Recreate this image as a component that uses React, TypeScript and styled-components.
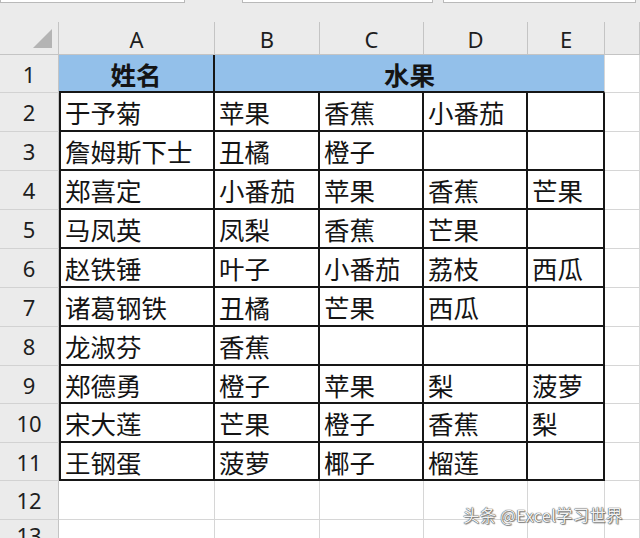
import React from "react";
import styled, { createGlobalStyle } from "styled-components";

const Global = createGlobalStyle`
  html, body { margin: 0; padding: 0; background: #fff; }
  #root { width: 640px; height: 538px; }
`;

const DARK = "#161616";
const GRID = "#d6d6d6";
const HEAD_BG = "#ebebeb";
const HEAD_LINE = "#c4c4c4";

const Page = styled.div`
  position: relative;
  width: 640px;
  height: 538px;
  overflow: hidden;
  background: #fff;
  font-family: "Noto Sans", "Noto Sans CJK SC", sans-serif;
`;

const TopStrip = styled.div`
  height: 22px;
  background: ${HEAD_BG};
  display: flex;
  align-items: flex-start;
`;

const FormulaBox = styled.div<{ $w: number; $ml: number }>`
  width: ${(p) => p.$w}px;
  margin-left: ${(p) => p.$ml}px;
  height: 3px;
  background: #fff;
  border: 1px solid #b9b9b9;
  border-top: none;
  box-sizing: border-box;
`;

const Sheet = styled.div`
  display: grid;
  grid-template-columns: 59px 156px 105px 104px 104px 77px 1fr;
  grid-template-rows: 33px 38px 39px 39px 39px 39px 39px 39px 39px 38px 39px 38px 39px 30px;
`;

const Corner = styled.div`
  position: relative;
  background: ${HEAD_BG};
  border-right: 1px solid ${HEAD_LINE};
  border-bottom: 1px solid ${HEAD_LINE};
  box-sizing: border-box;
`;

const CornerTriangle = styled.div`
  position: absolute;
  right: 6px;
  bottom: 6px;
  width: 0;
  height: 0;
  border-left: 19px solid transparent;
  border-bottom: 19px solid #b4b4b4;
`;

const ColHead = styled.div`
  background: ${HEAD_BG};
  border-right: 1px solid ${HEAD_LINE};
  border-bottom: 1px solid ${HEAD_LINE};
  box-sizing: border-box;
  display: flex;
  align-items: center;
  justify-content: center;
  font-size: 22px;
  color: #1e1e1e;
  padding-top: 1px;
`;

const RowHead = styled.div`
  background: ${HEAD_BG};
  border-right: 1px solid ${HEAD_LINE};
  border-bottom: 1px solid #d2d2d2;
  box-sizing: border-box;
  display: flex;
  align-items: center;
  justify-content: center;
  font-size: 22px;
  color: #1e1e1e;
`;

const Cell = styled.div<{
  $span?: number;
  $bg?: string;
  $bold?: boolean;
  $center?: boolean;
  $dl?: boolean;
  $dr?: boolean;
  $db?: boolean;
  $dt?: boolean;
}>`
  grid-column: span ${(p) => p.$span ?? 1};
  box-sizing: border-box;
  background: ${(p) => p.$bg ?? "#fff"};
  border-right: ${(p) => (p.$dr ? `2px solid ${DARK}` : `1px solid ${GRID}`)};
  border-bottom: ${(p) => (p.$db ? `2px solid ${DARK}` : `1px solid ${GRID}`)};
  border-left: ${(p) => (p.$dl ? `2px solid ${DARK}` : "none")};
  border-top: ${(p) => (p.$dt ? `2px solid ${DARK}` : "none")};
  display: flex;
  align-items: center;
  justify-content: ${(p) => (p.$center ? "center" : "flex-start")};
  padding-left: ${(p) => (p.$center ? 0 : 4)}px;
  font-family: "Noto Sans CJK SC", sans-serif;
  font-size: 25.5px;
  font-weight: ${(p) => (p.$bold ? 700 : 400)};
  color: #141414;
  white-space: nowrap;
  overflow: hidden;
`;

const Watermark = styled.div`
  position: absolute;
  left: 463px;
  top: 503px;
  font-family: "Noto Sans CJK SC", sans-serif;
  font-size: 16.5px;
  color: #f2f2f2;
  letter-spacing: 0.2px;
  text-shadow: 0 0 1px #444, 0 0 1px #444, 1px 1px 1px rgba(0, 0, 0, 0.45);
`;

const cols = ["A", "B", "C", "D", "E", ""];

const data: string[][] = [
  ["于予菊", "苹果", "香蕉", "小番茄", ""],
  ["詹姆斯下士", "丑橘", "橙子", "", ""],
  ["郑喜定", "小番茄", "苹果", "香蕉", "芒果"],
  ["马凤英", "凤梨", "香蕉", "芒果", ""],
  ["赵铁锤", "叶子", "小番茄", "荔枝", "西瓜"],
  ["诸葛钢铁", "丑橘", "芒果", "西瓜", ""],
  ["龙淑芬", "香蕉", "", "", ""],
  ["郑德勇", "橙子", "苹果", "梨", "菠萝"],
  ["宋大莲", "芒果", "橙子", "香蕉", "梨"],
  ["王钢蛋", "菠萝", "椰子", "榴莲", ""],
];

const BLUE = "#93c0ea";

export default function App() {
  return (
    <Page>
      <Global />
      <TopStrip>
        <FormulaBox $w={185} $ml={0} />
        <FormulaBox $w={191} $ml={57} />
        <FormulaBox $w={193} $ml={10} />
      </TopStrip>
      <Sheet>
        <Corner>
          <CornerTriangle />
        </Corner>
        {cols.map((c, i) => (
          <ColHead key={i}>{c}</ColHead>
        ))}

        <RowHead>1</RowHead>
        <Cell $bg={BLUE} $bold $center $dr $db>
          姓名
        </Cell>
        <Cell $bg={BLUE} $bold $center $span={4} $db>
          水果
        </Cell>
        <Cell />

        {data.map((row, r) => (
          <React.Fragment key={r}>
            <RowHead>{r + 2}</RowHead>
            {row.map((v, c) => (
              <Cell key={c} $dl={c === 0} $dr $db>
                {v}
              </Cell>
            ))}
            <Cell />
          </React.Fragment>
        ))}

        {[12, 13].map((n) => (
          <React.Fragment key={n}>
            <RowHead>{n}</RowHead>
            {[0, 1, 2, 3, 4, 5].map((c) => (
              <Cell key={c} />
            ))}
          </React.Fragment>
        ))}
      </Sheet>
      <Watermark>头条 @Excel学习世界</Watermark>
    </Page>
  );
}
